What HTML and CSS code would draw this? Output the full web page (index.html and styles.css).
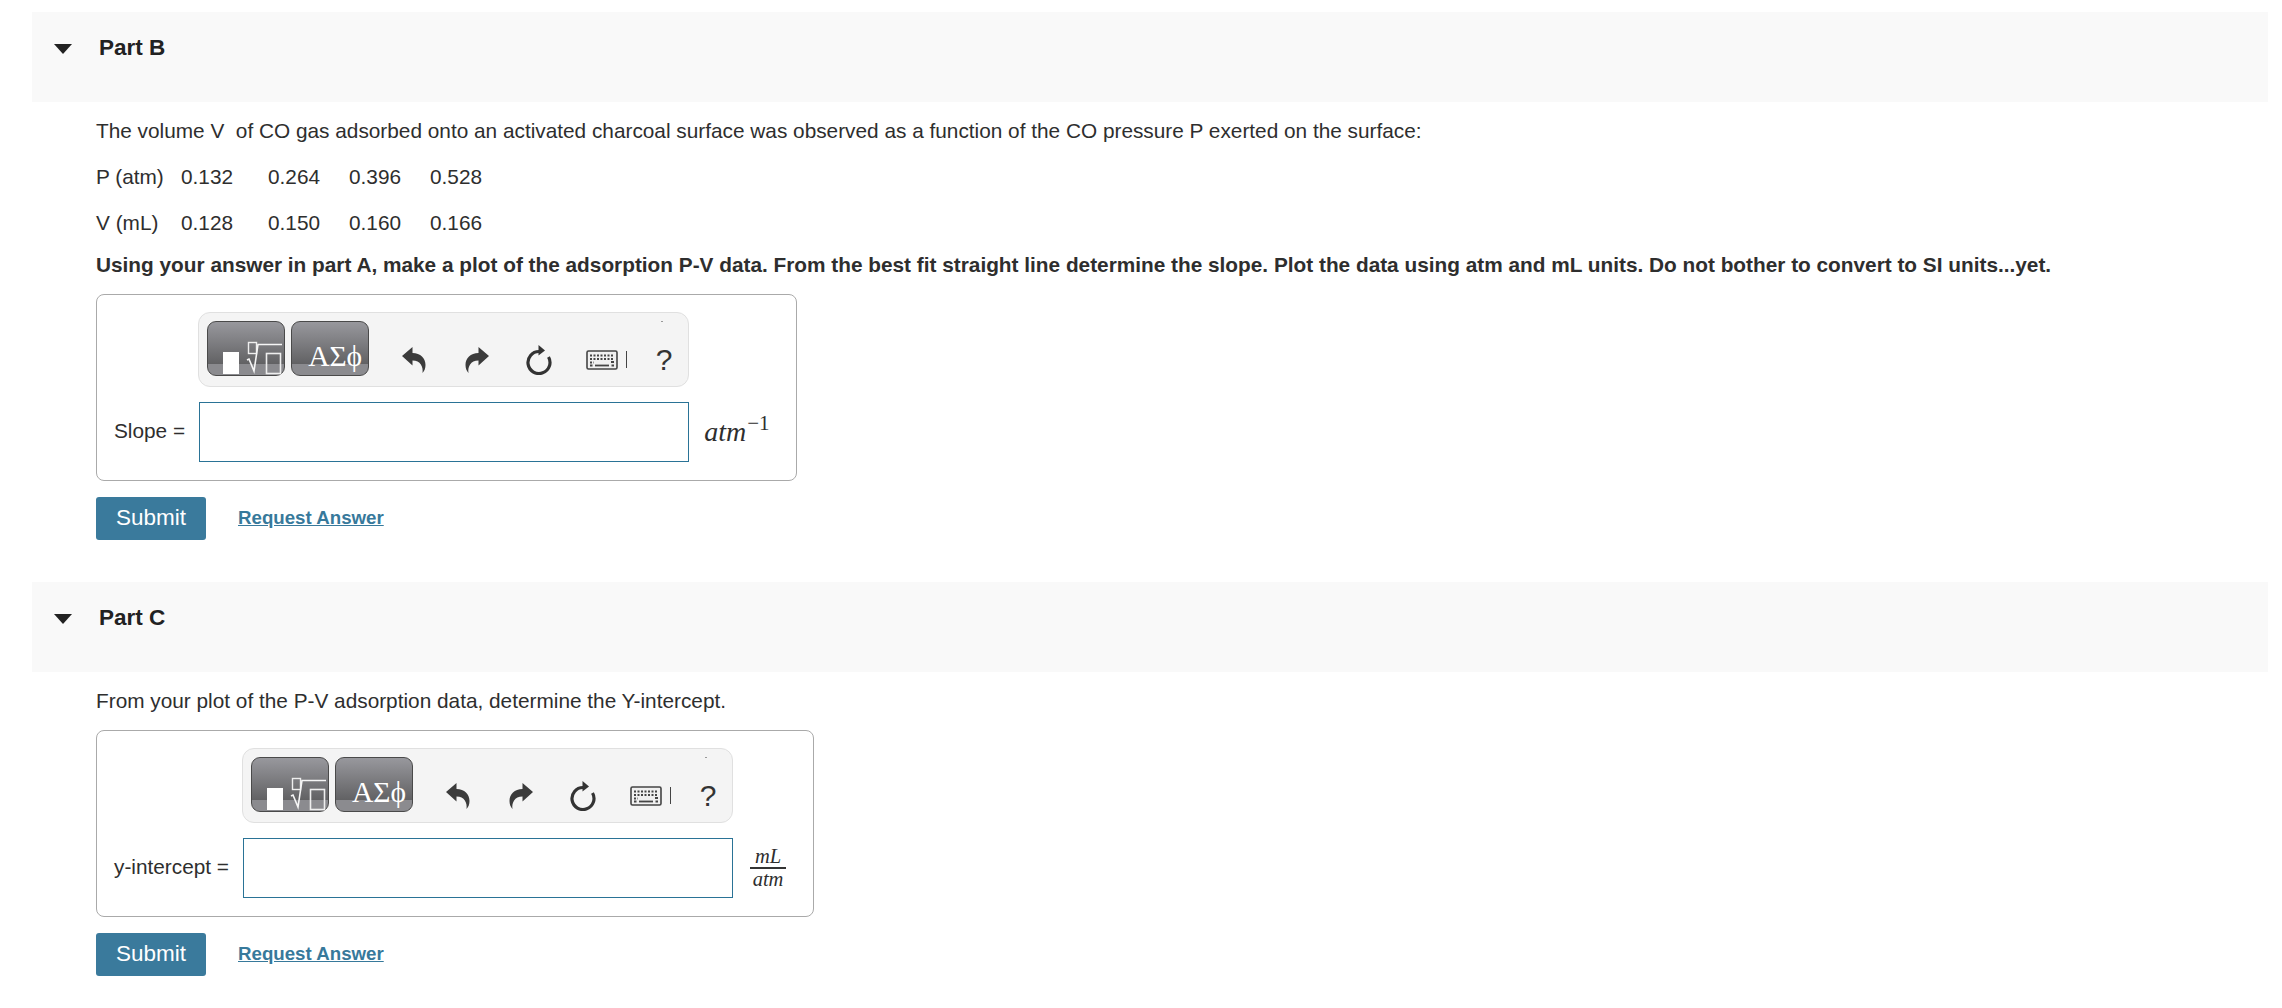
FILE: index.html
```html
<!DOCTYPE html>
<html lang="en">
<head>
  <meta charset="UTF-8" />
  <title>Adsorption Parts B and C</title>
  <link rel="stylesheet" href="styles.css">
</head>
<body>
  <svg class="defs" xmlns="http://www.w3.org/2000/svg">
    <symbol id="ico-templates" viewBox="0 0 78 55">
      <rect x="16" y="31" width="16" height="22" fill="#fff"/>
      <rect x="41.5" y="21.5" width="8" height="11" fill="none" stroke="#eee" stroke-width="1.4"/>
      <path d="M40 39 L42 38 L47 50 L51 23.5 H75" fill="none" stroke="#f6f6f6" stroke-width="1.6"/>
      <rect x="59.5" y="32.5" width="14" height="20" fill="none" stroke="#eee" stroke-width="1.6"/>
    </symbol>
    <symbol id="ico-undo" viewBox="0 0 24 26">
      <path d="M0 9 L10.500 0 V6 C18.500 6 23.500 11 23.500 18 C23.500 21 22.500 24 20.500 26 C21.500 20 18.500 13.500 10.500 13.500 V18.500 Z" fill="#3b3b3b"/>
    </symbol>
    <symbol id="ico-redo" viewBox="0 0 24 26">
      <path d="M24 9 L13.500 0 V6 C5.500 6 0.500 11 0.500 18 C0.500 21 1.500 24 3.500 26 C2.500 20 5.500 13.500 13.500 13.500 V18.500 Z" fill="#3b3b3b"/>
    </symbol>
    <symbol id="ico-reset" viewBox="0 0 28 31">
      <path d="M14 7.500 A11 11 0 1 0 23.500 13" fill="none" stroke="#333" stroke-width="3.200"/>
      <path d="M13.500 1 L20 6.500 L13.500 11.500 Z" fill="#333"/>
    </symbol>
    <symbol id="ico-keyboard" viewBox="0 0 32 20">
      <rect x="1" y="1" width="30" height="18" rx="1.500" fill="#f0f0f0" stroke="#444" stroke-width="1.600"/>
      <path d="M4 5.500 H28 M4 9 H28 M4 12.500 H8" stroke="#444" stroke-width="1.800" stroke-dasharray="2 1.500" fill="none"/>
      <path d="M9 15.500 H23" stroke="#444" stroke-width="1.800" fill="none"/>
      <path d="M4 15.500 H6.500 M25.500 15.500 H28 M25 12 H28" stroke="#444" stroke-width="1.800" fill="none"/>
    </symbol>
    <symbol id="ico-caret" viewBox="0 0 18 10">
      <path d="M0 0 H18 L9 10 Z" fill="#222"/>
    </symbol>
  </svg>

  <div class="part">
    <div class="part-head">
      <svg class="caret"><use href="#ico-caret"/></svg>
      <h2>Part B</h2>
    </div>
    <div class="part-body">
      <p class="first">The volume V&nbsp; of CO gas adsorbed onto an activated charcoal surface was observed as a function of the CO pressure P exerted on the surface:</p>
      <div class="data">
        <span>P (atm)</span><span>0.132</span><span>0.264</span><span>0.396</span><span>0.528</span>
      </div>
      <div class="data">
        <span>V (mL)</span><span>0.128</span><span>0.150</span><span>0.160</span><span>0.166</span>
      </div>
      <p class="ask">Using your answer in part A, make a plot of the adsorption P-V data. From the best fit straight line determine the slope. Plot the data using atm and mL units. Do not bother to convert to SI units...yet.</p>
      <div class="answer">
        <div class="toolbar">
          <div class="tool-btn"><svg class="ico-tpl"><use href="#ico-templates"/></svg></div>
          <div class="tool-btn greek">ΑΣϕ</div>
          <div class="tool"><svg class="ico-arrow"><use href="#ico-undo"/></svg></div>
          <div class="tool"><svg class="ico-arrow"><use href="#ico-redo"/></svg></div>
          <div class="tool"><svg class="ico-reset"><use href="#ico-reset"/></svg></div>
          <div class="tool kbd"><svg class="ico-kbd"><use href="#ico-keyboard"/></svg><span class="kbd-bar"></span></div>
          <div class="tool help">?</div>
          <span class="speck"></span>
        </div>
        <label class="lbl">Slope =</label>
        <input class="field" type="text">
        <div class="unit">atm<sup>−1</sup></div>
      </div>
      <div class="actions">
        <button class="submit">Submit</button>
        <a class="req" href="#">Request Answer</a>
      </div>
    </div>
  </div>

  <div class="part">
    <div class="part-head">
      <svg class="caret"><use href="#ico-caret"/></svg>
      <h2>Part C</h2>
    </div>
    <div class="part-body">
      <p class="first">From your plot of the P-V adsorption data, determine the Y-intercept.</p>
      <div class="answer">
        <div class="toolbar">
          <div class="tool-btn"><svg class="ico-tpl"><use href="#ico-templates"/></svg></div>
          <div class="tool-btn greek">ΑΣϕ</div>
          <div class="tool"><svg class="ico-arrow"><use href="#ico-undo"/></svg></div>
          <div class="tool"><svg class="ico-arrow"><use href="#ico-redo"/></svg></div>
          <div class="tool"><svg class="ico-reset"><use href="#ico-reset"/></svg></div>
          <div class="tool kbd"><svg class="ico-kbd"><use href="#ico-keyboard"/></svg><span class="kbd-bar"></span></div>
          <div class="tool help">?</div>
          <span class="speck"></span>
        </div>
        <label class="lbl">y-intercept =</label>
        <input class="field" type="text">
        <div class="unit frac"><span class="num">mL</span><span class="den">atm</span></div>
      </div>
      <div class="actions">
        <button class="submit">Submit</button>
        <a class="req" href="#">Request Answer</a>
      </div>
    </div>
  </div>
</body>
</html>
```
FILE: styles.css
```css
body {
  font-family: "Liberation Sans", Arial, sans-serif;
  font-size: 20.800px;
  line-height: 28px;
  color: #2e2e2e;
  margin: 0;
  padding: 12px 14px 0 32px;
  background: #fff;
}
.defs {
  display: none;
}
.part {
  margin-bottom: 42px;
}
.part-head {
  display: flex;
  align-items: flex-start;
  height: 90px;
  box-sizing: border-box;
  padding: 22px 0 0 22px;
  background: #f9f9f9;
}
.part-head h2 {
  margin: 0 0 0 27px;
  font-size: 22.500px;
  line-height: 28px;
  color: #222;
}
.caret {
  width: 18px;
  height: 10px;
  margin-top: 10px;
}
.part-body {
  padding-left: 64px;
}
p {
  margin: 0;
}
.first {
  margin-top: 15px;
}
.data {
  display: grid;
  grid-template-columns: 85px 87px 81px 81px auto;
  justify-content: start;
  margin-top: 18px;
}
.ask {
  margin-top: 14px;
  font-weight: bold;
}
.answer {
  display: inline-grid;
  grid-template-columns: auto 490px auto;
  row-gap: 15px;
  align-items: center;
  margin-top: 15px;
  padding: 17px 27px 18px 17px;
  border: 1px solid #aaa;
  border-radius: 8px;
}
.toolbar {
  position: relative;
  grid-column: 2;
  display: flex;
  box-sizing: border-box;
  height: 75px;
  margin-left: -1px;
  padding: 8px 0 8px 8px;
  background: #f4f4f4;
  border: 1px solid #e0e0e0;
  border-radius: 12px;
}
.tool-btn {
  flex: none;
  width: 78px;
  height: 55px;
  box-sizing: border-box;
  margin-right: 6px;
  border: 1px solid #4a4a4a;
  border-radius: 9px;
  background: linear-gradient(#98989d 0%, #616163 80%, #8b8b8f 80%, #8b8b8f 100%);
}
.ico-tpl {
  display: block;
  width: 78px;
  height: 55px;
  margin: -1px;
}
.greek {
  margin-right: 23px;
  padding: 17px 0 0 16px;
  font-family: "Liberation Serif", serif;
  font-size: 29.500px;
  line-height: 34px;
  color: #fff;
  white-space: nowrap;
}
.tool {
  flex: none;
  display: flex;
  align-items: center;
  justify-content: center;
  width: 44px;
  height: 55px;
  box-sizing: border-box;
  margin-right: 18.500px;
  padding-top: 22px;
}
.ico-arrow {
  width: 24px;
  height: 26px;
}
.ico-reset {
  width: 28px;
  height: 31px;
}
.ico-kbd {
  flex: none;
  width: 32px;
  height: 20px;
}
.kbd {
  padding-left: 10px;
}
.kbd-bar {
  flex: none;
  width: 1px;
  height: 17px;
  margin-left: 8px;
  background: #444;
}
.help {
  margin-right: 0;
  font-size: 30px;
  color: #333;
}
.speck {
  position: absolute;
  top: 8px;
  right: 25px;
  width: 2px;
  height: 1px;
  background: #999;
}
.lbl {
  grid-column: 1;
  padding: 0 14px 2px 0;
}
.field {
  grid-column: 2;
  box-sizing: border-box;
  width: 490px;
  height: 60px;
  border: 1px solid #2a7396;
  background: #fff;
  outline: none;
}
.unit {
  grid-column: 3;
  padding-left: 15px;
  font-family: "Liberation Serif", serif;
  font-style: italic;
  font-size: 28px;
  line-height: 30px;
}
.unit sup {
  font-style: normal;
  font-size: 21px;
  line-height: 0;
  vertical-align: 11px;
  margin-left: 1px;
}
.frac {
  display: flex;
  flex-direction: column;
  align-items: center;
  width: 53px;
  box-sizing: border-box;
  padding-left: 17px;
  font-size: 20.500px;
  line-height: 21px;
}
.frac .num {
  align-self: stretch;
  text-align: center;
  border-bottom: 2px solid #333;
}
.actions {
  display: flex;
  align-items: center;
  margin-top: 16px;
}
.submit {
  width: 110px;
  height: 43px;
  padding: 0 0 2px;
  background-color: #3a7a9c;
  color: #fff;
  border: none;
  border-radius: 3px;
  font-family: "Liberation Sans", Arial, sans-serif;
  font-size: 22.500px;
}
.req {
  margin-left: 32px;
  padding-bottom: 2px;
  color: #37799b;
  font-size: 18.700px;
  font-weight: bold;
}
```
